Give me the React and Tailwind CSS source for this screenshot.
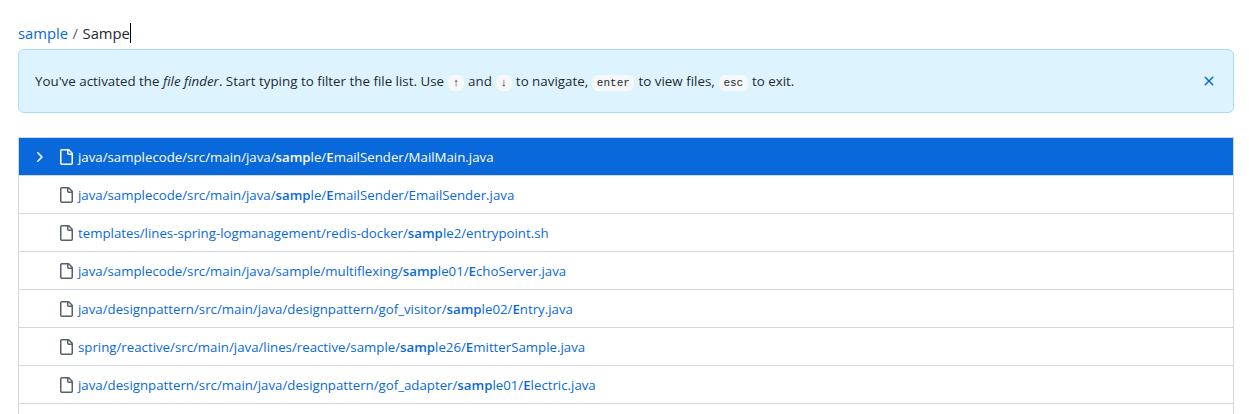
const FileIcon = ({ className }) => (
  <svg className={className} width="16" height="16" viewBox="0 0 16 16" fill="currentColor">
    <path d="M2 1.75C2 .784 2.784 0 3.75 0h6.586c.464 0 .909.184 1.237.513l2.914 2.914c.329.328.513.773.513 1.237v9.586A1.75 1.75 0 0 1 13.25 16h-9.5A1.75 1.75 0 0 1 2 14.25Zm1.75-.25a.25.25 0 0 0-.25.25v12.5c0 .138.112.25.25.25h9.5a.25.25 0 0 0 .25-.25V6h-2.75A1.75 1.75 0 0 1 9 4.25V1.5Zm6.75.062V4.25c0 .138.112.25.25.25h2.688l-.011-.013-2.914-2.914-.013-.011Z" />
  </svg>
);

const files = [
  ["java/samplecode/src/main/java/", "samp", "le/", "E", "mailSender/MailMain.java"],
  ["java/samplecode/src/main/java/", "samp", "le/", "E", "mailSender/EmailSender.java"],
  ["templates/lines-spring-logmanagement/redis-docker/", "samp", "le2/", "", "entrypoint.sh"],
  ["java/samplecode/src/main/java/sample/multiflexing/", "samp", "le01/", "E", "choServer.java"],
  ["java/designpattern/src/main/java/designpattern/gof_visitor/", "samp", "le02/", "E", "ntry.java"],
  ["spring/reactive/src/main/java/lines/reactive/sample/", "samp", "le26/", "E", "mitterSample.java"],
  ["java/designpattern/src/main/java/designpattern/gof_adapter/", "samp", "le01/", "E", "lectric.java"],
];

const Key = ({ children }) => (
  <kbd className="mx-[0.75px] rounded-[6px] bg-[#f6f8fa] px-[4.5px] py-[2px] font-['Liberation_Mono',monospace] text-[11px] text-[#24292f]">
    {children}
  </kbd>
);

const App = () => {
  return (
    <div className="h-[414px] overflow-hidden bg-white pl-[18px] pr-[15px] pt-[23px] font-['Open_Sans',sans-serif] text-sm text-[#24292f]">
      <div className="flex h-[20px] items-center text-[14.8px] leading-[20px]">
        <a href="#" className="text-[#0969da]">sample</a>
        <span className="mx-[4.5px] text-[#57606a]">/</span>
        <span>Sampe</span>
        <span className="h-[20px] w-px bg-black"></span>
      </div>

      <div className="mt-[6px] flex h-[64px] items-center justify-between rounded-[6px] border border-[#a8dcff] bg-[#ddf4ff] pl-[16px] pr-[16px] text-[13.35px]">
        <p className="pt-[2px]">
          You've activated the <em>file finder</em>. Start typing to filter the file list. Use <Key>↑</Key> and <Key>↓</Key> to navigate, <Key>enter</Key> to view files, <Key>esc</Key> to exit.
        </p>
        <svg width="16" height="16" viewBox="0 0 16 16" fill="#0969da">
          <path d="M3.72 3.72a.75.75 0 0 1 1.06 0L8 6.94l3.22-3.22a.749.749 0 0 1 1.06 1.06L9.06 8l3.22 3.22a.749.749 0 0 1-1.06 1.06L8 9.06l-3.22 3.22a.749.749 0 0 1-1.06-1.06L6.94 8 3.72 4.78a.75.75 0 0 1 0-1.06Z" />
        </svg>
      </div>

      <div className="mt-[24px] border-x border-t border-[#d0d7de] text-[13.25px]">
        {files.map((parts, i) => (
          <div
            key={i}
            className={`flex h-[38px] items-center border-b border-[#d0d7de] ${i === 0 ? "bg-[#0969da] text-white" : "text-[#0969da]"}`}
          >
            <span className="flex w-[39px] justify-center pl-[1px]">
              {i === 0 && (
                <svg width="16" height="16" viewBox="0 0 16 16" fill="white">
                  <path d="M6.22 3.22a.75.75 0 0 1 1.06 0l4.25 4.25a.75.75 0 0 1 0 1.06l-4.25 4.25a.751.751 0 0 1-1.042-.018.751.751 0 0 1-.018-1.042L9.94 8 6.22 4.28a.75.75 0 0 1 0-1.06Z" />
                </svg>
              )}
            </span>
            <FileIcon className={i === 0 ? "text-white" : "text-[#57606a]"} />
            <span className="ml-[4px] pt-[2px]">
              {parts[0]}
              <b className="font-semibold">{parts[1]}</b>
              {parts[2]}
              <b className="font-semibold">{parts[3]}</b>
              {parts[4]}
            </span>
          </div>
        ))}
        <div className="h-[30px]"></div>
      </div>
    </div>
  );
};

export default App;
